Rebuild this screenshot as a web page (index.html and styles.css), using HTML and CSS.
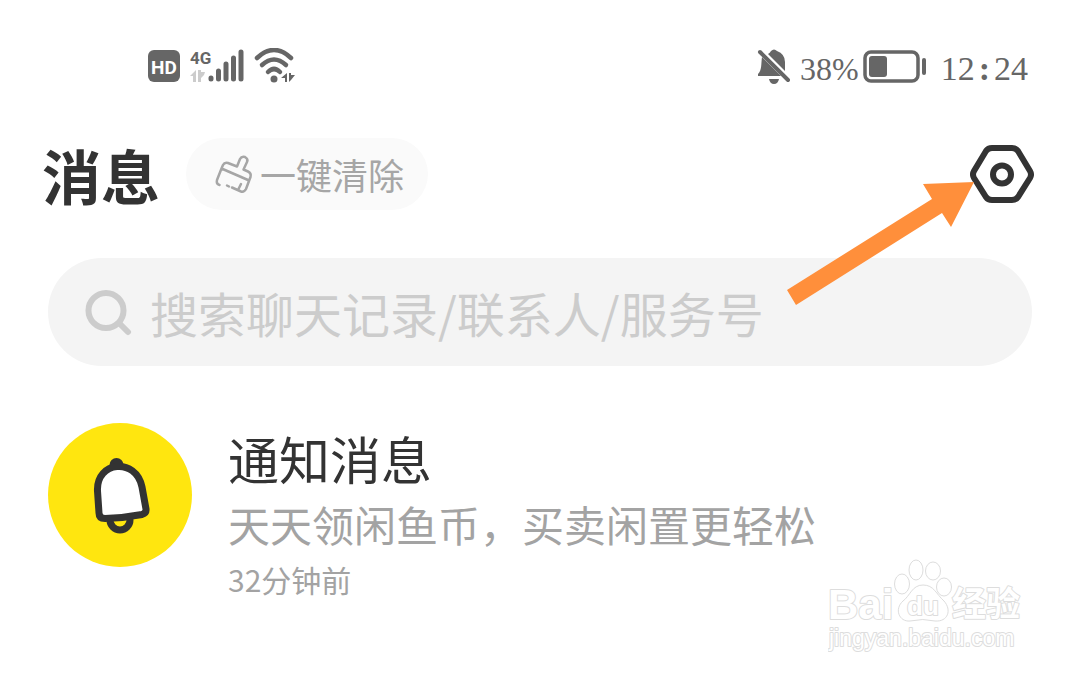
FILE: index.html
```html
<!DOCTYPE html>
<html lang="zh-CN">

<head>
    <meta charset="UTF-8">
    <meta name="viewport" content="width=device-width, initial-scale=1.0">
    <title>消息</title>
    <link rel="stylesheet" href="styles.css">
</head>

<body>
    <div class="status">
        <div class="status-left">
            <svg width="34" height="34" viewBox="0 0 34 34" aria-hidden="true">
                <rect x="0" y="1" width="32" height="32" rx="6" fill="#666"/>
                <text class="hd" x="16" y="25" text-anchor="middle">HD</text>
            </svg>
            <svg width="56" height="36" viewBox="0 0 56 36" aria-hidden="true">
                <text class="net" x="0" y="16">4G</text>
                <path fill="#ccc" d="M0 28l6-6v12H3v-6zM8 22h3v12H8zM11 24h4l-1 3-3 3z"/>
                <path stroke="#666" stroke-width="5" stroke-linecap="round" d="M21 30v1M28.500 23v8M36 16v15M43.500 10v21M51 4v27"/>
            </svg>
            <svg width="42" height="36" viewBox="0 0 42 36" aria-hidden="true">
                <g fill="none" stroke="#666" stroke-width="4.500" stroke-linecap="round">
                    <path d="M3 10Q20-6 37 10"/>
                    <path d="M8 17Q20 6 32 17"/>
                    <path d="M14 24Q20 18 26 24"/>
                </g>
                <circle cx="20" cy="31" r="3.500" fill="#666"/>
                <path fill="#666" d="M27 30l6-5v9h-2v-4zM35 25h2v2h4l-4 5-2 2z"/>
            </svg>
        </div>
        <div class="status-right">
            <svg width="34" height="36" viewBox="0 0 34 36" aria-hidden="true">
                <path fill="#666" d="M1 28V26C5 22 4 16 5 9L24 28zM11 6q2-1 3-3 3-3 6 0 8 3 8 11v9zM12 31h10q-1 5-5 5t-5-5z"/>
                <path stroke="#666" stroke-width="4" stroke-linecap="round" d="M3 4L31 32"/>
            </svg>
            <span class="percent">38%</span>
            <svg width="66" height="36" viewBox="0 0 66 36" aria-hidden="true">
                <rect x="2" y="4" width="53" height="29" rx="6" fill="none" stroke="#666" stroke-width="3.500"/>
                <rect x="6" y="8" width="18" height="21" rx="3" fill="#666"/>
                <rect x="59" y="10" width="4" height="17" rx="2" fill="#666"/>
            </svg>
            <time class="clock">12<span class="colon">:</span>24</time>
        </div>
    </div>

    <header class="header">
        <h1>消息</h1>
        <button class="clear" type="button">
            <svg width="40" height="42" viewBox="0 0 40 42" fill="none" stroke="#a6a6a6" stroke-width="2.500" stroke-linecap="round" stroke-linejoin="round" aria-hidden="true">
                <path d="M5.500 32Q2 31 3 27L7.500 15.500 9 12Q10.500 9 14 10L23 13.500 26 6Q27.500 3 31 4Q34.500 6 33 9L29.500 16.500 34 18.500Q37.500 20 36.500 24L32 36Q30 39.500 27 38.500L18 34.500M7.500 15.500L34 27M24 37l3-6M13 32.500l2 1"/>
            </svg>
            <span>一键清除</span>
        </button>
        <button class="settings" type="button" aria-label="设置">
            <svg width="64" height="60" viewBox="0 0 64 60" fill="none" stroke="#333" stroke-width="6" aria-hidden="true">
                <path d="M22 4H42Q46 4 48 7L60 27Q62 30.500 60 34L48 53Q46 56 42 56H22Q18 56 16 53L4 34Q2 30.500 4 27L16 7Q18 4 22 4z"/>
                <circle cx="32" cy="30.500" r="9"/>
            </svg>
        </button>
    </header>

    <label class="search">
        <svg width="48" height="48" viewBox="0 0 48 48" fill="none" stroke="#ccc" stroke-width="6" stroke-linecap="round" aria-hidden="true">
            <circle cx="22" cy="22.500" r="17.500"/>
            <path d="M36 36l8 8"/>
        </svg>
        <input type="search" placeholder="搜索聊天记录/联系人/服务号" aria-label="搜索聊天记录/联系人/服务号">
    </label>

    <main>
        <a class="message" href="#">
            <span class="avatar">
                <svg width="144" height="144" viewBox="0 0 144 144" aria-hidden="true">
                    <circle cx="72" cy="97" r="10" fill="none" stroke="#333" stroke-width="7"/>
                    <circle cx="68.500" cy="42" r="7" fill="#333"/>
                    <path fill="#fff" stroke="#333" stroke-width="7" stroke-linejoin="round" d="M49.500 68C48 38 88 34 94 64L98 86Q98.500 90 94 91.500Q76 95 57 95.500Q51 95.500 51 90z"/>
                </svg>
            </span>
            <span class="text">
                <strong>通知消息</strong>
                <span class="summary">天天领闲鱼币，买卖闲置更轻松</span>
                <time>32分钟前</time>
            </span>
        </a>
    </main>

    <svg class="arrow" width="190" height="126" viewBox="0 0 190 126" aria-hidden="true">
        <path fill="#ff8f3b" d="M3 110L148 19 139 4 190 2 167 47 158 33 12 125z"/>
    </svg>

    <svg class="watermark" width="200" height="96" viewBox="0 0 200 96" aria-hidden="true">
        <ellipse cx="74" cy="26" rx="7.500" ry="10"/>
        <ellipse cx="88" cy="12" rx="7" ry="10"/>
        <ellipse cx="105" cy="13" rx="7.500" ry="9"/>
        <ellipse cx="116" cy="29" rx="7.500" ry="9"/>
        <path d="M95 27C84 27 82 38 75 43C66 51 71 64 82 63Q95 60 107 63C120 64 124 52 116 43C108 36 106 27 95 27z"/>
        <text class="mark-bai" x="0" y="61">Bai</text>
        <text class="mark-du" x="95" y="57" text-anchor="middle">du</text>
        <text class="mark-cn" x="124" y="58">经验</text>
        <text class="mark-url" x="1" y="88">jingyan.baidu.com</text>
    </svg>
</body>

</html>
```
FILE: styles.css
```css
* {
    box-sizing: border-box;
}

body {
    position: relative;
    min-height: 100vh;
    margin: 0;
    padding: 48px 48px 0;
    background: #fff;
    color: #333;
    font-family: "Noto Sans CJK SC", sans-serif;
}

button,
input {
    border: 0;
    padding: 0;
    background: none;
    font: inherit;
}

svg {
    display: block;
    flex: none;
}

.status,
.status-left,
.status-right {
    display: flex;
    align-items: center;
}

.status {
    justify-content: space-between;
    height: 36px;
    padding: 0 4px 0 100px;
    color: #666;
    font: 34px/36px "Liberation Serif", serif;
}

.status-left {
    gap: 8px;
}

.status-right {
    gap: 4px;
}

.percent {
    margin-left: 5px;
    font-size: 32px;
}

.clock {
    margin-left: 8px;
}

.percent,
.clock {
    padding-top: 6px;
}

.colon {
    margin: 0 4px;
    font-weight: bold;
}

.hd {
    fill: #fff;
    font: bold 19px "Roboto", sans-serif;
}

.net {
    fill: #666;
    font: bold 17px "Roboto", sans-serif;
}

.header {
    display: flex;
    align-items: center;
    height: 72px;
    margin: 54px 0 48px -6px;
}

h1 {
    margin: 0;
    padding-top: 2px;
    font-size: 59px;
    line-height: 72px;
}

.clear {
    display: flex;
    align-items: center;
    gap: 6px;
    height: 72px;
    margin-left: 26px;
    padding: 0 24px 0 28px;
    border-radius: 36px;
    background: #fafafa;
    color: #a6a6a6;
    font-size: 36px;
    line-height: 72px;
}

.settings {
    margin-left: auto;
    margin-right: -2px;
}

.search {
    display: flex;
    align-items: center;
    gap: 18px;
    height: 108px;
    padding: 0 36px;
    border-radius: 54px;
    background: #f4f4f4;
}

.search input {
    flex: 1;
    min-width: 0;
    height: 72px;
    outline: 0;
    font-size: 48px;
}

.search input::placeholder {
    color: #ccc;
    opacity: 1;
}

.message {
    display: flex;
    gap: 36px;
    margin-top: 57px;
    color: #333;
    text-decoration: none;
}

.avatar {
    flex: none;
    width: 144px;
    height: 144px;
    border-radius: 50%;
    background: #ffe60f;
}

.text {
    display: flex;
    flex-direction: column;
}

.text strong {
    font-size: 51px;
    font-weight: 400;
    line-height: 70px;
}

.summary {
    color: #a3a3a3;
    font-size: 42px;
    line-height: 62px;
}

.text time {
    color: #a3a3a3;
    font-size: 30px;
    line-height: 48px;
}

.arrow {
    position: absolute;
    top: 180px;
    right: 106px;
}

.watermark {
    position: absolute;
    top: 558px;
    right: 52px;
    fill: #fff;
    stroke: #ddd;
    stroke-width: 1px;
}

.watermark text {
    stroke-width: 2px;
    stroke-linejoin: round;
    paint-order: stroke;
}

.mark-bai {
    font: bold 42px "Liberation Sans", sans-serif;
}

.mark-du {
    font: bold 26px "Liberation Sans", sans-serif;
}

.mark-cn {
    font: bold 34px "Noto Sans CJK SC", sans-serif;
}

.mark-url {
    font: 23px "Liberation Sans", sans-serif;
}
```
